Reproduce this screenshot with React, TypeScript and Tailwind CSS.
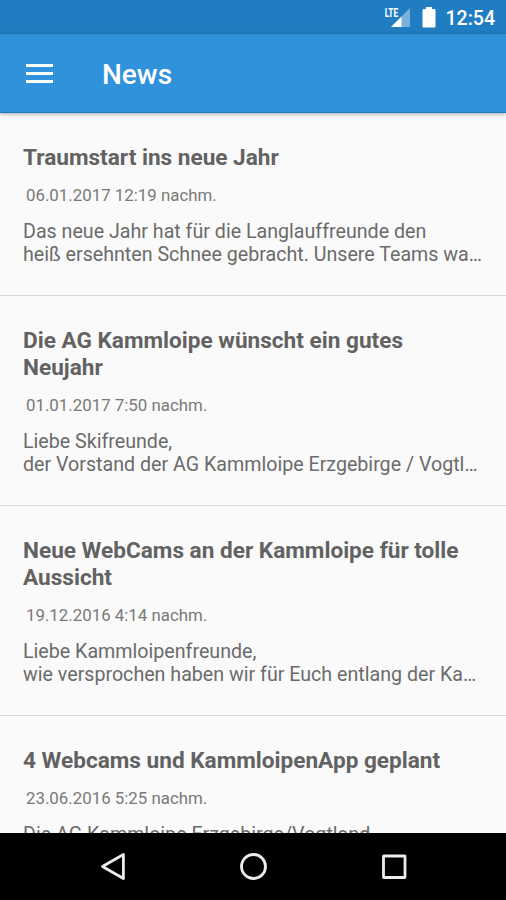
const articles = [
  {
    title: 'Traumstart ins neue Jahr',
    date: '06.01.2017 12:19 nachm.',
    preview: ['Das neue Jahr hat für die Langlauffreunde den', 'heiß ersehnten Schnee gebracht. Unsere Teams wa…'],
  },
  {
    title: 'Die AG Kammloipe wünscht ein gutes Neujahr',
    date: '01.01.2017 7:50 nachm.',
    preview: ['Liebe Skifreunde,', 'der Vorstand der AG Kammloipe Erzgebirge / Vogtl…'],
  },
  {
    title: 'Neue WebCams an der Kammloipe für tolle Aussicht',
    date: '19.12.2016 4:14 nachm.',
    preview: ['Liebe Kammloipenfreunde,', 'wie versprochen haben wir für Euch entlang der Ka…'],
  },
  {
    title: '4 Webcams und KammloipenApp geplant',
    date: '23.06.2016 5:25 nachm.',
    preview: ['Die AG Kammloipe Erzgebirge/Vogtland'],
  },
]

function StatusBar() {
  return (
    <div className="flex h-[34px] shrink-0 items-center justify-end bg-[#207dc2] pr-[11px] text-white">
      <svg width="28" height="34" viewBox="0 0 28 34" className="mr-[10px]">
        <path d="M26 8v19H7z" fill="#fff" fillOpacity="0.4" />
        <path d="M17.500 16.500V27H7z" fill="#fff" />
        <path d="M0 5h14.500v12.500H0z" fill="#207dc2" />
        <text x="0.700" y="16.500" fontSize="13" fontWeight="700" fontFamily="Roboto, sans-serif" fill="#fff" textLength="13.500" lengthAdjust="spacingAndGlyphs">
          LTE
        </text>
      </svg>
      <svg width="14" height="34" viewBox="0 0 14 34" className="mr-[10px]">
        <path d="M4 7h6v2h2.200c.7 0 1.300.6 1.300 1.300v16c0 .7-.6 1.300-1.300 1.300H1.800c-.7 0-1.300-.6-1.300-1.300v-16C.5 9.600 1.100 9 1.800 9H4z" fill="#fff" />
      </svg>
      <span className="pt-[3px] text-[19.5px] leading-none font-medium">12:54</span>
    </div>
  )
}

function AppBar() {
  return (
    <header className="relative z-10 flex h-[79px] shrink-0 items-center border-b border-[#1c7cba] bg-[#3092da] pl-[26px] text-white shadow-[0_1px_4px_rgba(0,0,0,0.35)]">
      <button aria-label="Menu" className="mr-[49px] flex w-[27px] flex-col gap-[5px]">
        <span className="h-[3px] bg-white" />
        <span className="h-[3px] bg-white" />
        <span className="h-[3px] bg-white" />
      </button>
      <h1 className="pt-1 text-[28px] leading-none font-medium">News</h1>
    </header>
  )
}

function NavBar() {
  return (
    <nav className="flex h-[67px] shrink-0 items-center justify-center bg-black">
      <svg width="506" height="67" viewBox="0 0 506 67" fill="none" stroke="#ececec" strokeWidth="2.800" strokeLinejoin="round">
        <path d="M123.400 21.500v24L102.500 33.500z" />
        <circle cx="253.500" cy="33.500" r="12" />
        <rect x="383.500" y="23" width="21.500" height="21.500" rx="0.500" />
      </svg>
    </nav>
  )
}

export default function App() {
  return (
    <div className="flex h-[900px] w-[506px] flex-col overflow-hidden bg-[#fafafa] font-[Roboto,sans-serif]">
      <StatusBar />
      <AppBar />
      <main className="min-h-0 flex-1 overflow-hidden">
        {articles.map((article) => (
          <article key={article.date} className="border-b border-[#dadada] px-[23px] pt-[30.5px] pb-[29.5px] text-[#6b6b6b]">
            <h2 className="text-[22.6px] leading-[27px] font-bold text-[#626262]">{article.title}</h2>
            <p className="mt-[14px] pl-[3px] text-[16.85px] leading-[20px] text-[#797979]">{article.date}</p>
            <div className="mt-[15px] text-[19.65px] leading-[23px] whitespace-nowrap">
              {article.preview.map((line) => (
                <p key={line}>{line}</p>
              ))}
            </div>
          </article>
        ))}
      </main>
      <NavBar />
    </div>
  )
}
